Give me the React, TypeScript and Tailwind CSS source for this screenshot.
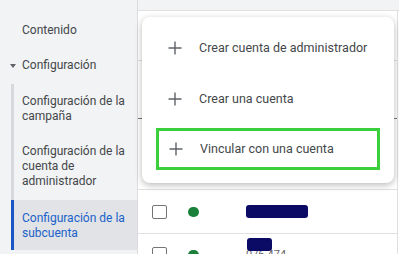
import React from "react";

const Plus = () => (
  <svg width="14" height="14" viewBox="0 0 14 14" className="shrink-0">
    <path d="M7 0.5V13.5M0.5 7H13.5" stroke="#5f6368" strokeWidth="1.4" fill="none" />
  </svg>
);

const MenuItem = ({ label }: { label: string }) => (
  <div className="flex items-center h-full pl-[26px] gap-[17px] text-[12.5px] text-[#44474a]">
    <Plus />
    <span>{label}</span>
  </div>
);

const Sidebar = () => (
  <aside className="w-[138px] shrink-0 bg-[#f1f3f4] border-r border-[#dadce0] pt-[13px] text-[12px] leading-[15px] text-[#44474a]">
    <div className="h-[35px] flex items-center pl-[22px]">Contenido</div>
    <div className="h-[35px] flex items-center relative pl-[22px]">
      <svg width="6" height="4" viewBox="0 0 6 4" className="absolute left-[10px] top-[16px]">
        <path d="M0 0H6L3 4Z" fill="#5f6368" />
      </svg>
      Configuración
    </div>
    <div className="mt-[1px] ml-[11px] border-l-[3px] border-[#d6d8db]">
      <div className="py-[10px] pl-[8px] pr-2">Configuración de la campaña</div>
      <div className="pt-[10px] pb-[11px] pl-[8px] pr-2">Configuración de la cuenta de administrador</div>
      <div className="-ml-[3px] pt-[11px] pb-[9px] pl-[8px] pr-2 border-l-[3px] border-[#1a56c4] bg-[#e1e3e6] text-[#1a62c9]">
        Configuración de la subcuenta
      </div>
    </div>
  </aside>
);

const Main = () => (
  <div className="flex-1 flex flex-col min-h-0">
    <div className="h-[11px] shrink-0 bg-[#f1f3f4] border-b border-[#e0e0e0]" />
    <div className="w-[260px] flex-1 min-h-0 border-r border-[#e0e0e0]">
      <div className="h-[50px] border-b border-[#e0e0e0]" />
      <div className="h-[58px] border-b border-[#777]" />
      <div className="h-[71px] border-b border-[#e0e0e0]" />
      <div className="h-[44px] border-b border-[#e0e0e0] flex items-center">
        <div className="ml-[14px] w-[15px] h-[14px] border-[1.5px] border-[#757575] rounded-[2px]" />
        <div className="ml-[21px] w-[11px] h-[10px] rounded-full bg-[#188038]" />
        <div className="ml-[47px] w-[62px] h-[13px] rounded-[3px] bg-[#0b0b66]" />
      </div>
      <div className="relative h-[30px]">
        <div className="absolute left-[14px] top-[13px] w-[15px] h-[14px] border-[1.5px] border-[#757575] rounded-[2px]" />
        <div className="absolute left-[50px] top-[16px] w-[11px] h-[10px] rounded-full bg-[#188038]" />
        <div className="absolute left-[108px] top-[14px] text-[11px] leading-[13px] text-[#5f6368]">076-474</div>
        <div className="absolute left-[109px] top-[4px] w-[25px] h-[13px] rounded-[3px] bg-[#0b0b66]" />
      </div>
    </div>
  </div>
);

export default function App() {
  return (
    <div className="relative w-[399px] h-[254px] overflow-hidden flex bg-white font-['Roboto',sans-serif]">
      <Sidebar />
      <Main />
      <div className="absolute left-[142px] top-[17px] w-[252px] h-[166px] bg-white rounded-[8px] shadow-[0_2px_7px_rgba(0,0,0,0.28)] pt-[6px]">
        <div className="h-[50px]">
          <MenuItem label="Crear cuenta de administrador" />
        </div>
        <div className="h-[52px]">
          <MenuItem label="Crear una cuenta" />
        </div>
        <div className="mt-[3px] mx-[14px] h-[42px] border-[3px] border-[#3ccf3c] flex items-center pl-[10px] gap-[17px] text-[12.5px] text-[#44474a]">
          <Plus />
          <span>Vincular con una cuenta</span>
        </div>
      </div>
    </div>
  );
}
